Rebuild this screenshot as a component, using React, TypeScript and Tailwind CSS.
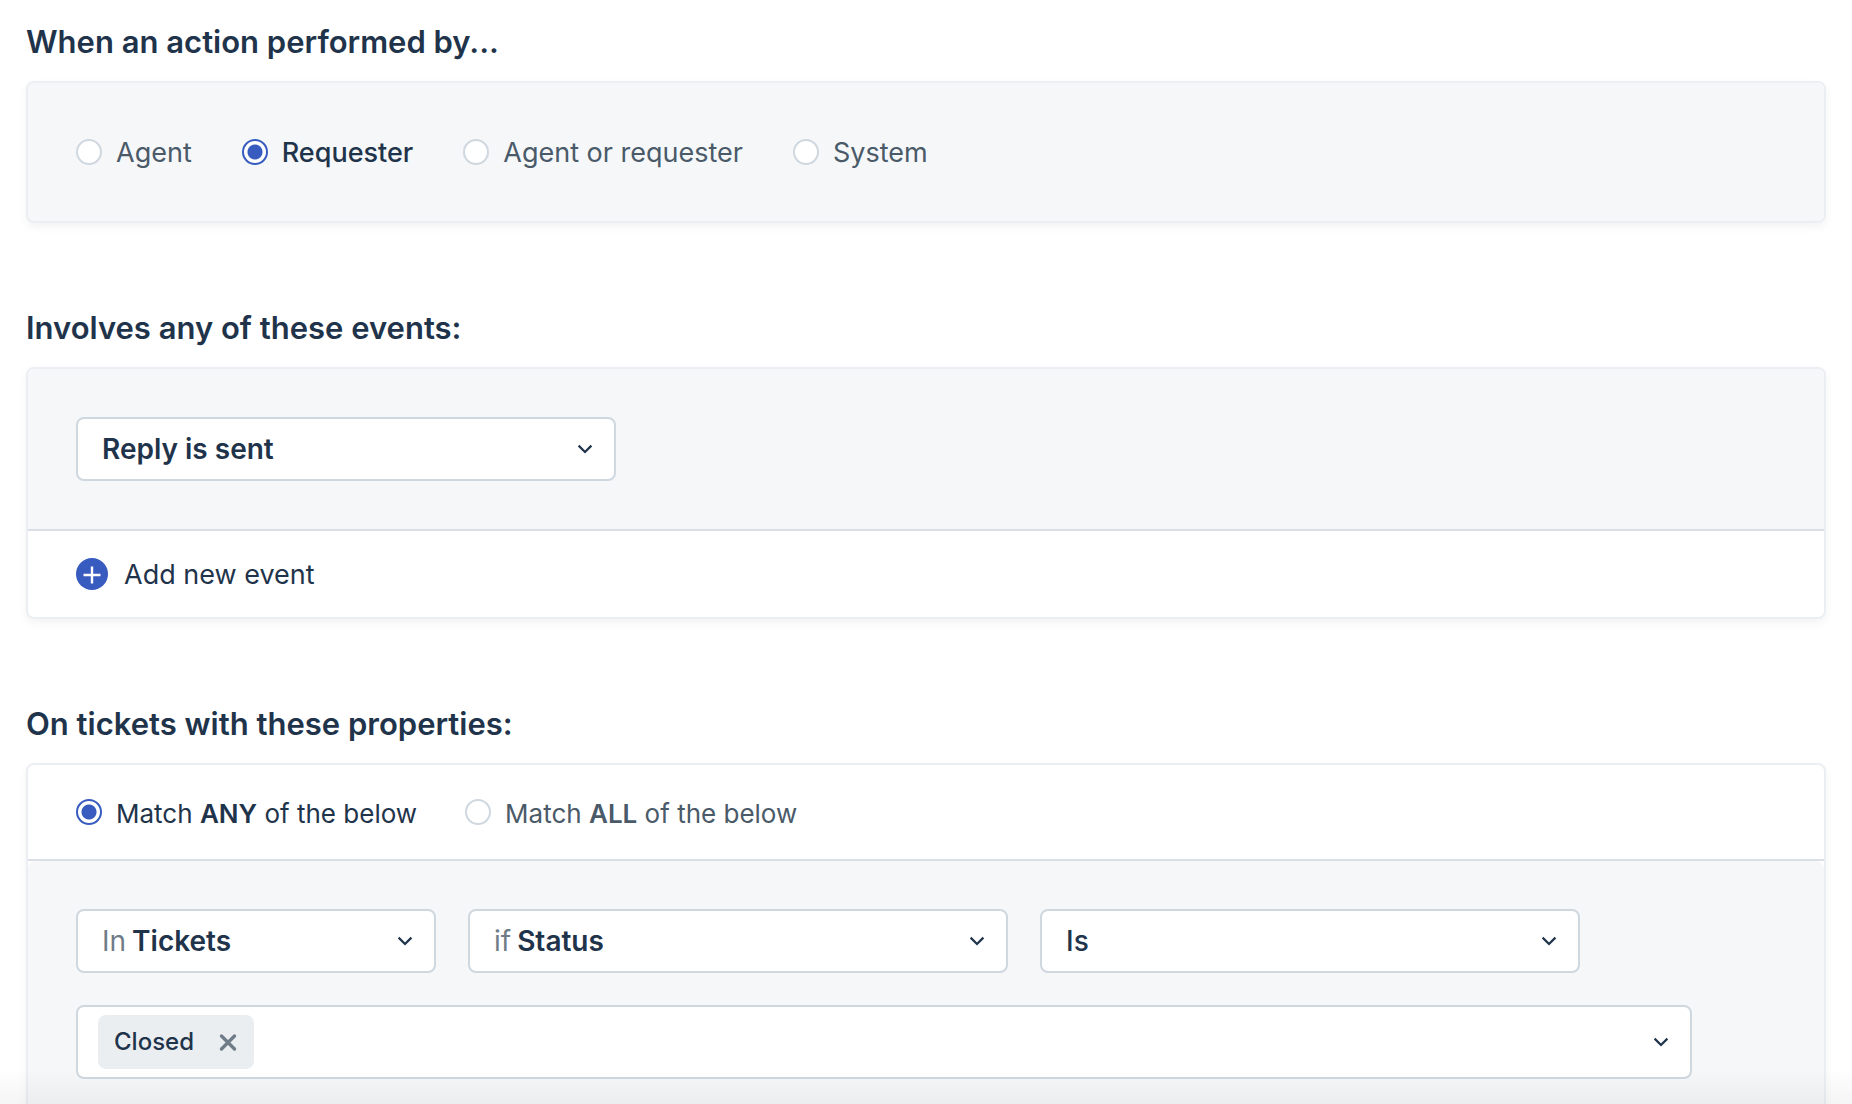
import { useState, type ReactNode } from "react";

function Chevron() {
  return (
    <svg className="pointer-events-none absolute right-[19px] size-5" viewBox="0 0 20 20" fill="none" stroke="#1f344b" strokeWidth="2.2" aria-hidden="true">
      <path d="M3.6 6.6 L10 13 L16.4 6.6" />
    </svg>
  );
}

type RadioProps = {
  name: string;
  value: string;
  current: string;
  onChange: (value: string) => void;
  className?: string;
  children: ReactNode;
};

function Radio({ name, value, current, onChange, className = "", children }: RadioProps) {
  const checked = current === value;
  return (
    <label className={`flex items-center gap-3.5 ${checked ? "text-[#1f344b]" : "text-[#4a5a69]"} ${className}`}>
      <input
        type="radio"
        name={name}
        value={value}
        checked={checked}
        onChange={() => onChange(value)}
        className="size-[26px] shrink-0 appearance-none rounded-full border-2 border-[#cfd7df] bg-white checked:border-[#385bc0] checked:bg-[radial-gradient(circle,#385bc0_7px,#fff_8px)]"
      />
      <span className="pt-0.5">{children}</span>
    </label>
  );
}

type SelectProps = {
  id: string;
  label: string;
  prefix?: string;
  options: string[];
  className: string;
};

function Select({ id, label, prefix, options, className }: SelectProps) {
  return (
    <div className={`relative flex h-16 items-center rounded-lg border-2 border-[#cfd7df] bg-white pl-6 text-[28px] ${className}`}>
      {prefix && (
        <label htmlFor={id} className="pr-1.5 text-[#6f7c87]">
          {prefix}
        </label>
      )}
      <select
        id={id}
        aria-label={label}
        className="h-full min-w-0 flex-1 appearance-none bg-transparent text-[#1f344b] outline-none"
      >
        {options.map((option) => (
          <option key={option}>{option}</option>
        ))}
      </select>
      <Chevron />
    </div>
  );
}

function Section({ title, children }: { title: string; children: ReactNode }) {
  return (
    <section>
      <h2 className="mb-[19px] pt-px text-[31px] leading-10 font-semibold text-[#1f344b]">{title}</h2>
      <div className="overflow-hidden rounded-lg border-2 border-[#ebeef3] bg-white shadow-[0_4px_10px_rgba(0,0,0,0.05)]">{children}</div>
    </section>
  );
}

export default function App() {
  const [performer, setPerformer] = useState("requester");
  const [match, setMatch] = useState("any");

  return (
    <main className="relative flex h-screen flex-col gap-21 overflow-hidden bg-white px-[26px] pt-[21px] font-['Inter',sans-serif]">
      <Section title="When an action performed by...">
        <div className="flex h-[138px] items-center gap-[50px] bg-[#f5f7f9] px-12 text-[27px]">
          <Radio name="performer" value="agent" current={performer} onChange={setPerformer}>Agent</Radio>
          <Radio name="performer" value="requester" current={performer} onChange={setPerformer} className="font-medium">Requester</Radio>
          <Radio name="performer" value="either" current={performer} onChange={setPerformer}>Agent or requester</Radio>
          <Radio name="performer" value="system" current={performer} onChange={setPerformer}>System</Radio>
        </div>
      </Section>

      <Section title="Involves any of these events:">
        <div className="border-b-2 border-[#d9dfe5] bg-[#f5f7f9] px-12 py-12">
          <Select id="event" label="Event" options={["Reply is sent", "Note is added", "Status is changed"]} className="max-w-[540px] font-semibold" />
        </div>
        <div className="flex h-[86px] items-center px-12">
          <button type="button" className="flex items-center gap-4 text-[27px] text-[#1f344b]">
            <svg className="size-8" viewBox="0 0 32 32" aria-hidden="true">
              <circle cx="16" cy="16" r="16" fill="#385bc0" />
              <path d="M16 8.5 V25.5 M7.5 17 H24.5" stroke="#fff" strokeWidth="2.4" />
            </svg>
            <span className="pt-0.5">Add new event</span>
          </button>
        </div>
      </Section>

      <Section title="On tickets with these properties:">
        <div className="flex h-24 items-center gap-12 border-b-2 border-[#d9dfe5] px-12 text-[26px]">
          <Radio name="match" value="any" current={match} onChange={setMatch}>
            Match <strong className="font-semibold">ANY</strong> of the below
          </Radio>
          <Radio name="match" value="all" current={match} onChange={setMatch}>
            Match <strong className="font-semibold">ALL</strong> of the below
          </Radio>
        </div>
        <div className="space-y-8 rounded-t-lg bg-[#f5f7f9] py-12 pr-[132px] pl-12">
          <div className="flex gap-8">
            <Select id="scope" label="In" prefix="In" options={["Tickets", "Contacts", "Companies"]} className="w-[360px] [&>select]:font-semibold" />
            <Select id="field" label="If" prefix="if" options={["Status", "Priority", "Type"]} className="w-[540px] [&>select]:font-semibold" />
            <Select id="operator" label="Operator" options={["Is", "Is not"]} className="w-[540px] font-medium" />
          </div>

          {/* Selected values */}
          <div className="relative flex h-[74px] items-center rounded-lg border-2 border-[#cfd7df] bg-white px-5">
            <span className="flex h-[54px] items-center gap-6 rounded-lg bg-[#ebeef1] px-4 text-[24px] font-medium text-[#1f344b]">
              Closed
              <button type="button" aria-label="Remove Closed">
                <svg className="size-5" viewBox="0 0 20 20" fill="none" stroke="#6f7c87" strokeWidth="3.4" strokeLinecap="round" aria-hidden="true">
                  <path d="M3.5 4 L16.5 17 M16.5 4 L3.5 17" />
                </svg>
              </button>
            </span>
            <input type="text" aria-label="Status values" className="h-full min-w-0 flex-1 bg-transparent pl-4 text-[24px] outline-none" />
            <Chevron />
          </div>
        </div>
      </Section>

      {/* Scroll fade */}
      <div className="pointer-events-none absolute inset-x-0 bottom-0 h-9 bg-linear-to-b from-black/0 to-black/4" />
    </main>
  );
}
